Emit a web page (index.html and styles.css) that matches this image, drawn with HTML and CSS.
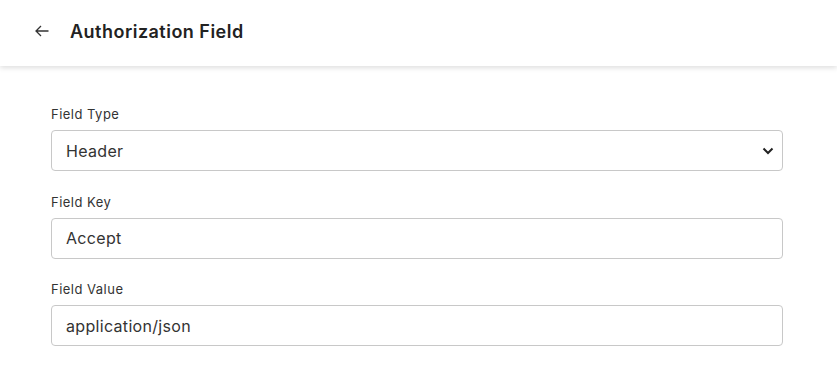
FILE: index.html
```html
<!DOCTYPE html>
<html>
  <head>
    <meta charset="utf-8">
    <title>Authorization Field</title>
    <link rel="stylesheet" href="styles.css">
  </head>
  <body>
    <div class="topbar">
      <span class="back">
        <svg width="14" height="12" viewBox="0 0 14 12"><path d="M13.5 6H1M6 1L1 6l5 5" fill="none" stroke="#333" stroke-width="1.3"/></svg>
      </span>
      <h1 class="title">Authorization Field</h1>
    </div>

    <div class="form">
      <div class="field">
        <label class="field-label">Field Type</label>
        <div class="select-wrap">
          <select class="input select">
            <option>Header</option>
            <option>Query</option>
          </select>
          <svg class="chevron" width="12" height="8" viewBox="0 0 12 8"><path d="M1.5 1.5L6 6l4.5-4.5" fill="none" stroke="#222" stroke-width="2"/></svg>
        </div>
      </div>

      <div class="field">
        <label class="field-label">Field Key</label>
        <input class="input" type="text" value="Accept">
      </div>

      <div class="field">
        <label class="field-label">Field Value</label>
        <input class="input" type="text" value="application/json">
      </div>
    </div>
  </body>
</html>
```

FILE: styles.css
```css
html {
  font-family: Inter, "Noto Sans", sans-serif;
  letter-spacing: 0.03em;
}
body {
  margin: 0;
  background-color: #ffffff;
  color: #333333;
}
.topbar {
  height: 66px;
  display: flex;
  align-items: center;
  padding-left: 35px;
  box-shadow: 0 2px 5px rgba(0, 0, 0, 0.13);
}
.back {
  display: flex;
  width: 14px;
  margin-right: 21px;
  margin-top: -4px;
}
.title {
  margin: 0 0 4px 0;
  font-size: 18px;
  font-weight: 600;
  color: #222222;
}
.form {
  padding: 40px 54px 0 51px;
}
.field {
  display: flex;
  flex-direction: column;
  margin-bottom: 22.5px;
}
.field-label {
  font-size: 13px;
  line-height: 16px;
  color: #333333;
  margin-bottom: 8px;
}
.input {
  box-sizing: border-box;
  width: 100%;
  height: 41px;
  padding: 0 14px;
  border: 1px solid #c8c8c8;
  border-radius: 4px;
  font-family: Inter, "Noto Sans", sans-serif;
  font-size: 16px;
  letter-spacing: 0.02em;
  color: #333333;
  background-color: #ffffff;
  outline: none;
}
.select-wrap {
  position: relative;
}
.select {
  appearance: none;
  -webkit-appearance: none;
}
.chevron {
  position: absolute;
  right: 9px;
  top: 17px;
  pointer-events: none;
}
```
